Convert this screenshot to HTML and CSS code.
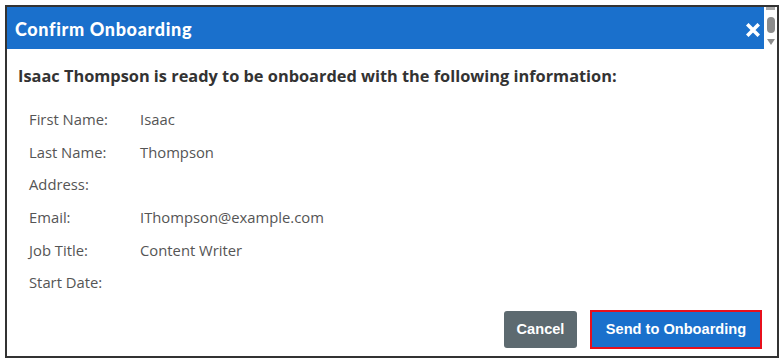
FILE: index.html
```html
<!DOCTYPE html>
<html>
<head>
<meta charset="utf-8">
<link rel="stylesheet" href="styles.css">
</head>
<body>
<div class="dialog">
  <div class="main">
    <div class="header">
      <span class="title">Confirm Onboarding</span>
      <svg class="close" width="14" height="14" viewBox="0 0 14 14"><path d="M2.5 2.5 L11.5 11.5 M11.5 2.5 L2.5 11.5" stroke="#ffffff" stroke-width="3.6" stroke-linecap="square" fill="none"/></svg>
    </div>
    <div class="content">
      <p class="lead">Isaac Thompson is ready to be onboarded with the following information:</p>
      <div class="fields">
        <div class="label">First Name:</div><div class="value">Isaac</div>
        <div class="label">Last Name:</div><div class="value">Thompson</div>
        <div class="label">Address:</div><div class="value"></div>
        <div class="label">Email:</div><div class="value">IThompson@example.com</div>
        <div class="label">Job Title:</div><div class="value">Content Writer</div>
        <div class="label">Start Date:</div><div class="value"></div>
      </div>
      <div class="actions">
        <button class="btn btn-cancel">Cancel</button>
        <button class="btn btn-send">Send to Onboarding</button>
      </div>
    </div>
  </div>
  <div class="scrollbar">
    <div class="arrow-up"></div>
    <div class="thumb"></div>
    <div class="arrow-down"></div>
  </div>
</div>
</body>
</html>
```
FILE: styles.css
```css
html, body {
  margin: 0;
  padding: 0;
  background: #ffffff;
}
body {
  padding: 5px 0 0 5px;
}
.dialog {
  width: 770px;
  height: 349px;
  border: 2px solid #333333;
  display: flex;
  background: #ffffff;
}
.main {
  width: 757px;
  display: flex;
  flex-direction: column;
}
.header {
  height: 42px;
  background: #1a70cc;
  display: flex;
  align-items: center;
  justify-content: space-between;
  padding: 0 4px 0 8px;
}
.title {
  font-family: "Lato", "Open Sans", sans-serif;
  font-weight: 900;
  font-size: 18px;
  color: #ffffff;
  letter-spacing: 0.65px;
  margin-top: 1px;
}
.close {
  display: block;
  margin-top: 4px;
}
.content {
  flex: 1;
  display: flex;
  flex-direction: column;
  padding: 0 0 0 11px;
}
.lead {
  margin: 16px 0 0 0;
  font-family: "Open Sans", sans-serif;
  font-weight: 700;
  font-size: 16.35px;
  line-height: 22px;
  color: #333333;
}
.fields {
  display: grid;
  grid-template-columns: 111px 1fr;
  grid-auto-rows: 32.6px;
  align-items: center;
  margin: 16px 0 0 11px;
  font-family: "Open Sans", sans-serif;
  font-size: 14.8px;
  color: #555555;
}
.actions {
  display: flex;
  justify-content: flex-end;
  align-items: flex-start;
  gap: 13px;
  padding: 11px 2px 0 0;
}
.btn {
  font-family: "Liberation Sans", Arial, sans-serif;
  font-weight: 700;
  font-size: 14.6px;
  color: #ffffff;
  border: none;
  border-radius: 3px;
  padding: 0;
}
.btn-cancel {
  background: #5d6a70;
  width: 73px;
  margin-top: 1px;
  height: 37px;
}
.btn-send {
  background: #1a70cc;
  border: 2px solid #e8101c;
  border-radius: 0;
  width: 172px;
  height: 39px;
}
.scrollbar {
  width: 13px;
  display: flex;
  flex-direction: column;
  align-items: center;
}
.arrow-up {
  width: 9px;
  height: 3px;
  background: #a9a9a9;
}
.thumb {
  margin-top: 7px;
  width: 8px;
  height: 16px;
  border-radius: 4px;
  background: #8c8c8c;
}
.arrow-down {
  margin-top: 6px;
  width: 0;
  height: 0;
  border-left: 4px solid transparent;
  border-right: 4px solid transparent;
  border-top: 6px solid #8c8c8c;
}
```
